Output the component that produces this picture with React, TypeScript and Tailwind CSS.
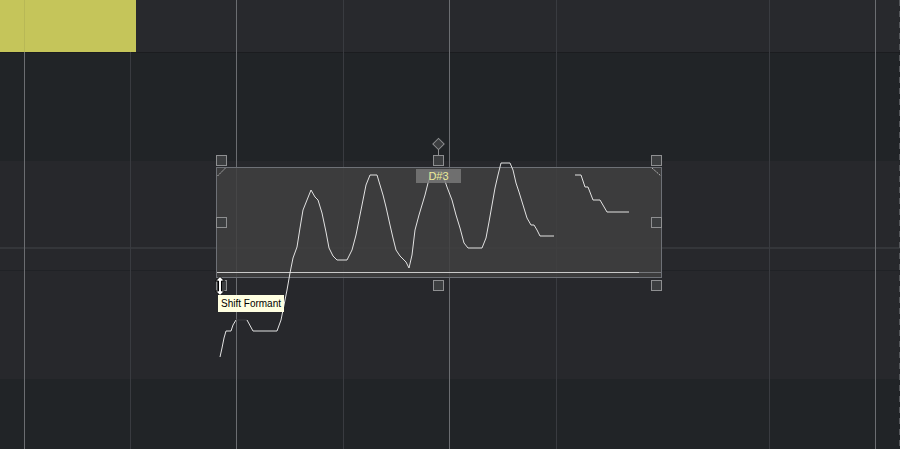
import React from "react";

const gridX: { x: number; bright: boolean }[] = [
  { x: 24, bright: true },
  { x: 130, bright: false },
  { x: 236, bright: true },
  { x: 343, bright: false },
  { x: 449, bright: true },
  { x: 556, bright: false },
  { x: 769, bright: false },
  { x: 875, bright: true },
];

const seg1a = "220,357 222,348 224,338 226,331 231,331 233,325 236,320";
const seg1b =
  "247,320 253,331 277,331 281,320 284,305 287,290 290,273 293,258 297,247 300,228 303,210 307,200 311,190 315,197 318,200 322,213 326,232 329,248 333,256 337,260 347,260 352,250 356,235 360,215 363,200 366,185 370,175 377,175 380,185 383,195 386,207 390,225 393,238 396,250 400,256 404,260 406,262 409,268 412,255 415,230 419,215 422,205 425,195 428,183 431,174 434,172 442,172 447,187 452,200 456,215 460,228 464,243 468,248 482,248 486,238 489,222 492,205 495,188 498,175 501,163 510,163 513,170 516,183 519,192 523,205 527,218 531,225 534,225 537,230 540,236 554,236";
const seg2 = "575,175 581,175 585,187 588,187 593,200 600,200 607,212 629,212";

function Handle({ left, top }: { left: number; top: number }) {
  return (
    <div
      className="absolute w-[11px] h-[11px] bg-[#3c3e40] border border-[#8e8f91]"
      style={{ left, top }}
    />
  );
}

export default function App() {
  return (
    <div className="relative w-[900px] h-[449px] overflow-hidden bg-[#212427] font-['Liberation_Sans',sans-serif]">
      {/* background bands */}
      <div className="flex flex-col w-full">
        <div className="h-[52px] bg-[#28292d]" />
        <div className="h-px bg-[#1b1c1f]" />
        <div className="h-[108px] bg-[#212427]" />
        <div className="h-[218px] bg-[#27282c] flex flex-col">
          <div className="h-[86px]" />
          <div className="h-[2px] bg-[#34363a]" />
          <div className="h-[21px]" />
          <div className="h-px bg-[#202226]" />
        </div>
        <div className="h-[70px] bg-[#212427]" />
      </div>

      {/* vertical grid lines */}
      {gridX.map((g) => (
        <div
          key={g.x}
          className={
            g.bright
              ? "absolute top-0 bottom-0 w-px bg-[#6b6d71]"
              : "absolute top-0 bottom-0 w-px bg-[#393b40]"
          }
          style={{ left: g.x }}
        />
      ))}

      {/* yellow clip block over the grid */}
      <div className="absolute left-0 top-0 w-[136px] h-[52px] bg-[#c5c55a] flex">
        <div className="w-[24px]" />
        <div className="w-px h-full bg-[#b8b856]" />
      </div>

      {/* right dashed edge */}
      <div className="absolute top-0 bottom-0 left-[899px] w-px bg-[repeating-linear-gradient(to_bottom,#55575b_0px,#55575b_6px,transparent_6px,transparent_11px)]" />

      {/* region box */}
      <div className="absolute left-[216px] top-[167px] w-[446px] h-[111px] border border-[#6e7177] bg-[rgba(64,64,64,0.86)]">
        <div className="absolute left-0 top-[104px] w-[422px] h-px bg-[#c9c9c9]" />
        <div className="absolute left-[422px] top-[104px] w-[22px] h-px bg-[#76787c]" />
      </div>

      {/* pitch curve and decorations */}
      <svg className="absolute inset-0 pointer-events-none" width={900} height={449}>
        <polyline points={seg1a} fill="none" stroke="#e2e2e2" strokeWidth={1} />
        <line x1={236} y1={320} x2={247} y2={320} stroke="#3c3d40" strokeWidth={1} />
        <polyline points={seg1b} fill="none" stroke="#e2e2e2" strokeWidth={1} />
        <polyline points={seg2} fill="none" stroke="#e2e2e2" strokeWidth={1} />
        <line x1={217.5} y1={176} x2={225.5} y2={168} stroke="#b5b5b5" strokeWidth={1} strokeDasharray="2 1" />
        <line x1={652} y1={168} x2={661} y2={176} stroke="#b5b5b5" strokeWidth={1} strokeDasharray="2 1" />
        <line x1={438.5} y1={149} x2={438.5} y2={155} stroke="#8e8f91" strokeWidth={1} />
        <rect x={434.5} y={140} width={8} height={8} transform="rotate(45 438.5 144)" fill="#3c3e40" stroke="#8e8f91" strokeWidth={1} />
      </svg>

      {/* handles */}
      <Handle left={216} top={155} />
      <Handle left={433} top={155} />
      <Handle left={651} top={155} />
      <Handle left={216} top={217} />
      <Handle left={651} top={217} />
      <Handle left={216} top={280} />
      <Handle left={433} top={280} />
      <Handle left={651} top={280} />

      {/* pitch label */}
      <div className="absolute left-[416px] top-[169px] w-[45px] h-[14px] bg-[rgba(120,120,120,0.85)] flex items-center justify-center text-[11px] leading-none text-[#ecec9a]">
        D#3
      </div>

      {/* cursor */}
      <svg className="absolute left-[214px] top-[276px]" width={12} height={20} viewBox="0 0 12 20">
        <path
          d="M6 0.5 L10.5 5 L7.5 5 L7.5 15 L10.5 15 L6 19.5 L1.5 15 L4.5 15 L4.5 5 L1.5 5 Z"
          fill="#ffffff"
          stroke="#000000"
          strokeWidth={1}
        />
      </svg>

      {/* tooltip */}
      <div className="absolute left-[218px] top-[295px] h-[17px] w-[66px] bg-[#ffffe1] flex items-center justify-center text-[10px] leading-none text-black whitespace-nowrap">
        Shift Formant
      </div>
    </div>
  );
}
